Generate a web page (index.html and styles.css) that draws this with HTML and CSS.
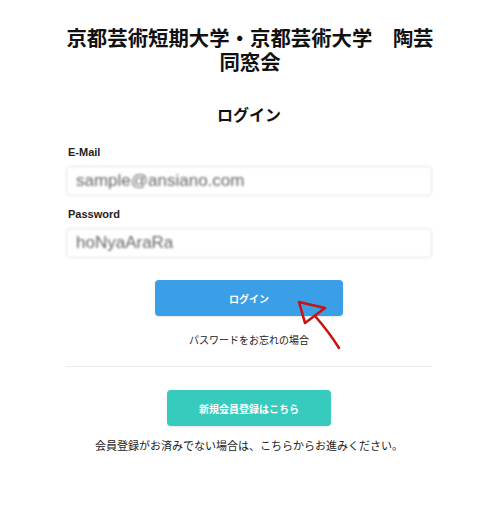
FILE: index.html
```html
<!DOCTYPE html>
<html lang="ja">
<head>
  <meta charset="UTF-8" />
  <meta name="viewport" content="width=device-width, initial-scale=1.0"/>
  <title>ログイン</title>
  <link rel="stylesheet" href="styles.css">
</head>
<body>

<div class="container">
  <h1 class="site-title">京都芸術短期大学・京都芸術大学　陶芸<br>同窓会</h1>

  <h2 class="page-title">ログイン</h2>

  <form class="login-form" onsubmit="return false;">
    <label class="label" for="email">E-Mail</label>
    <input class="input" id="email" type="text" value="sample@ansiano.com">

    <label class="label" for="password">Password</label>
    <input class="input" id="password" type="text" value="hoNyaAraRa">

    <div class="btn-wrap">
      <button class="btn btn-login">ログイン</button>
      <svg class="arrow" width="60" height="70" viewBox="0 0 60 70">
        <path d="M4 4 L30 10 L10 25 Z" fill="none" stroke="#c8150f" stroke-width="2.6" stroke-linejoin="round"/>
        <path d="M20 18 Q34 34 44 50" fill="none" stroke="#c8150f" stroke-width="2.6" stroke-linecap="round"/>
      </svg>
    </div>

    <p class="forgot">パスワードをお忘れの場合</p>
  </form>

  <hr class="divider">

  <div class="register">
    <button class="btn btn-register">新規会員登録はこちら</button>
    <p class="note">会員登録がお済みでない場合は、こちらからお進みください。</p>
  </div>
</div>

</body>
</html>
```

FILE: styles.css
```css
* {
  box-sizing: border-box;
  margin: 0;
  padding: 0;
}

body {
  font-family: 'Liberation Sans', 'Noto Sans CJK JP', sans-serif;
  background: #fff;
  color: #222;
}

.container {
  width: 368px;
  margin: 0 auto;
  padding-top: 27px;
  padding-right: 2px;
}

.site-title {
  font-size: 20.4px;
  line-height: 24px;
  text-align: center;
  font-weight: 700;
  color: #111;
  margin-right: -2px;
}

.page-title {
  font-size: 16px;
  line-height: 20px;
  text-align: center;
  font-weight: 700;
  margin-top: 31px;
  color: #111;
}

.login-form {
  display: flex;
  flex-direction: column;
}

.label {
  font-size: 11px;
  line-height: 14px;
  font-weight: 700;
  margin-top: 19px;
  margin-bottom: 7px;
  padding-left: 2px;
}

.label[for="password"] {
  margin-top: 11px;
}

.input {
  height: 30px;
  border: 1px solid #e2e2e2;
  border-radius: 4px;
  padding: 0 9px;
  font-family: 'Liberation Sans', sans-serif;
  font-size: 17px;
  color: #666;
  filter: blur(1.1px);
  outline: none;
}

.btn-wrap {
  position: relative;
  display: flex;
  justify-content: center;
  margin-top: 22px;
}

.btn {
  border: none;
  border-radius: 4px;
  color: #fff;
  font-family: 'Noto Sans CJK JP', sans-serif;
  font-weight: 700;
  font-size: 10px;
  cursor: pointer;
}

.btn-login {
  width: 188px;
  height: 36px;
  background: #3a9fe7;
  box-shadow: 0 1px 2px rgba(0,0,0,0.1);
}

.arrow {
  position: absolute;
  left: 229px;
  top: 18px;
}

.forgot {
  text-align: center;
  font-size: 10px;
  line-height: 14px;
  margin-top: 18px;
  color: #222;
}

.divider {
  border: none;
  border-top: 1px solid #ececec;
  margin-top: 18px;
}

.register {
  display: flex;
  flex-direction: column;
  align-items: center;
}

.btn-register {
  width: 164px;
  height: 36px;
  background: #36cbbd;
  margin-top: 23px;
  box-shadow: 0 1px 2px rgba(0,0,0,0.1);
}

.note {
  font-size: 11px;
  line-height: 14px;
  margin-top: 13px;
  color: #222;
}
```
